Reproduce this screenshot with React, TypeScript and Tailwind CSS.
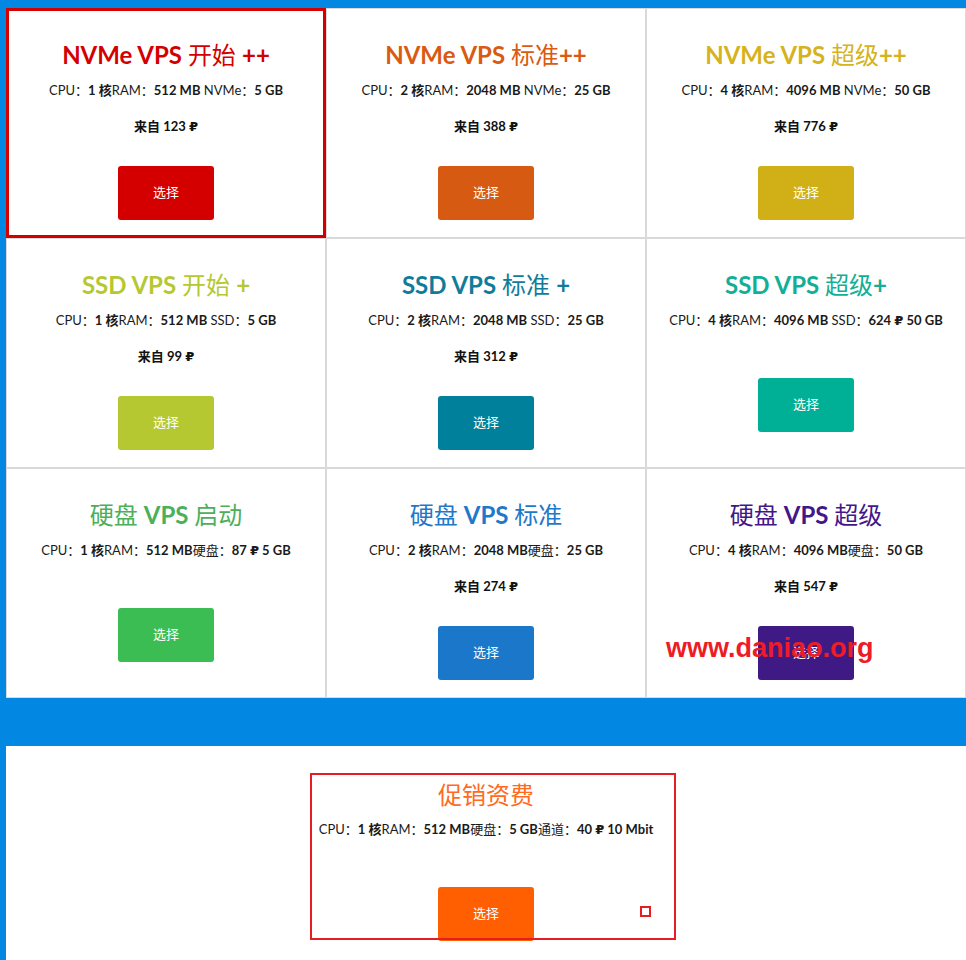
import React from "react";

type Part = { t: string; b?: boolean };

type Plan = {
  title: Part[];
  color: string;
  btn: string;
  specs: Part[];
  price?: string;
  active?: boolean;
};

const FONT = { fontFamily: 'Lato, "Noto Sans CJK SC", "DejaVu Sans", sans-serif' };

const plans: Plan[] = [
  {
    title: [{ t: "NVMe VPS ", b: true }, { t: "开始 " }, { t: "++", b: true }],
    color: "#d40000",
    btn: "#d40000",
    specs: [{ t: "CPU：" }, { t: "1 核", b: true }, { t: "RAM：" }, { t: "512 MB", b: true }, { t: " NVMe：" }, { t: "5 GB", b: true }],
    price: "来自 123 ₽",
    active: true,
  },
  {
    title: [{ t: "NVMe VPS ", b: true }, { t: "标准" }, { t: "++", b: true }],
    color: "#d95a10",
    btn: "#d65a11",
    specs: [{ t: "CPU：" }, { t: "2 核", b: true }, { t: "RAM：" }, { t: "2048 MB", b: true }, { t: " NVMe：" }, { t: "25 GB", b: true }],
    price: "来自 388 ₽",
  },
  {
    title: [{ t: "NVMe VPS ", b: true }, { t: "超级" }, { t: "++", b: true }],
    color: "#d6b21c",
    btn: "#d0b016",
    specs: [{ t: "CPU：" }, { t: "4 核", b: true }, { t: "RAM：" }, { t: "4096 MB", b: true }, { t: " NVMe：" }, { t: "50 GB", b: true }],
    price: "来自 776 ₽",
  },
  {
    title: [{ t: "SSD VPS ", b: true }, { t: "开始 " }, { t: "+", b: true }],
    color: "#b5c832",
    btn: "#b5c832",
    specs: [{ t: "CPU：" }, { t: "1 核", b: true }, { t: "RAM：" }, { t: "512 MB", b: true }, { t: " SSD：" }, { t: "5 GB", b: true }],
    price: "来自 99 ₽",
  },
  {
    title: [{ t: "SSD VPS ", b: true }, { t: "标准 " }, { t: "+", b: true }],
    color: "#107c9a",
    btn: "#00809b",
    specs: [{ t: "CPU：" }, { t: "2 核", b: true }, { t: "RAM：" }, { t: "2048 MB", b: true }, { t: " SSD：" }, { t: "25 GB", b: true }],
    price: "来自 312 ₽",
  },
  {
    title: [{ t: "SSD VPS ", b: true }, { t: "超级" }, { t: "+", b: true }],
    color: "#12ae96",
    btn: "#00b096",
    specs: [{ t: "CPU：" }, { t: "4 核", b: true }, { t: "RAM：" }, { t: "4096 MB", b: true }, { t: " SSD：" }, { t: "624 ₽ 50 GB", b: true }],
  },
  {
    title: [{ t: "硬盘 " }, { t: "VPS ", b: true }, { t: "启动" }],
    color: "#4caf5a",
    btn: "#3bbd54",
    specs: [{ t: "CPU：" }, { t: "1 核", b: true }, { t: "RAM：" }, { t: "512 MB", b: true }, { t: "硬盘：" }, { t: "87 ₽ 5 GB", b: true }],
  },
  {
    title: [{ t: "硬盘 " }, { t: "VPS ", b: true }, { t: "标准" }],
    color: "#1f78c8",
    btn: "#1a77c9",
    specs: [{ t: "CPU：" }, { t: "2 核", b: true }, { t: "RAM：" }, { t: "2048 MB", b: true }, { t: "硬盘：" }, { t: "25 GB", b: true }],
    price: "来自 274 ₽",
  },
  {
    title: [{ t: "硬盘 " }, { t: "VPS ", b: true }, { t: "超级" }],
    color: "#43168a",
    btn: "#3f1a85",
    specs: [{ t: "CPU：" }, { t: "4 核", b: true }, { t: "RAM：" }, { t: "4096 MB", b: true }, { t: "硬盘：" }, { t: "50 GB", b: true }],
    price: "来自 547 ₽",
  },
];

function Parts({ parts }: { parts: Part[] }) {
  return (
    <>
      {parts.map((p, i) => (
        <span key={i} className={p.b ? "font-bold" : "font-normal"}>
          {p.t}
        </span>
      ))}
    </>
  );
}

function Cell({ plan }: { plan: Plan }) {
  return (
    <div
      className={
        plan.active
          ? "w-[320px] h-[230px] bg-white border-[3px] border-[#d40000] flex flex-col items-center pt-[29px]"
          : "w-[320px] h-[230px] bg-white border border-[#d9d9d9] flex flex-col items-center pt-[31px]"
      }
    >
      <div className="text-[24px] leading-[30px] whitespace-nowrap" style={{ color: plan.color }}>
        <Parts parts={plan.title} />
      </div>
      <div className="mt-[10px] text-[13px] leading-[20px] whitespace-nowrap text-[#1a1a1a]">
        <Parts parts={plan.specs} />
      </div>
      {plan.price && (
        <div className="mt-[16px] text-[13px] leading-[20px] font-bold text-[#111]">{plan.price}</div>
      )}
      <button
        className={
          (plan.price ? "mt-[30px]" : "mt-[48px]") +
          " w-[96px] h-[54px] shrink-0 rounded-[3px] text-white text-[13px]"
        }
        style={{ backgroundColor: plan.btn }}
      >
        选择
      </button>
    </div>
  );
}

export default function App() {
  return (
    <div className="relative w-[966px] min-h-[960px] bg-[#0288e2] pl-[6px] pt-[8px] overflow-hidden" style={FONT}>
      <div className="grid grid-cols-[320px_320px_320px]">
        {plans.map((p, i) => (
          <Cell key={i} plan={p} />
        ))}
      </div>
      <div className="mt-[48px] w-[960px] h-[214px] bg-white flex">
        <div className="w-[320px]" />
        <div className="w-[320px] flex flex-col items-center pt-[34px]">
          <div className="text-[24px] leading-[30px] whitespace-nowrap text-[#ff6a1f] font-normal">促销资费</div>
          <div className="mt-[9px] text-[13px] leading-[20px] whitespace-nowrap text-[#1a1a1a]">
            <Parts
              parts={[
                { t: "CPU：" },
                { t: "1 核", b: true },
                { t: "RAM：" },
                { t: "512 MB", b: true },
                { t: "硬盘：" },
                { t: "5 GB", b: true },
                { t: "通道：" },
                { t: "40 ₽ 10 Mbit", b: true },
              ]}
            />
          </div>
          <button className="mt-[48px] w-[96px] h-[54px] shrink-0 rounded-[3px] text-white text-[13px] bg-[#ff5f00]">
            选择
          </button>
        </div>
      </div>

      {/* annotation overlays */}
      <div className="absolute left-[310px] top-[773px] w-[366px] h-[167px] border-2 border-[#e81c24] pointer-events-none" />
      <div className="absolute left-[640px] top-[906px] w-[11px] h-[11px] border-2 border-[#e81c24] pointer-events-none" />
      <div
        className="absolute left-[666px] top-[633px] text-[27px] leading-[30px] font-bold text-[#ee1c25] whitespace-nowrap pointer-events-none"
        style={{ fontFamily: '"Liberation Sans", Arial, sans-serif' }}
      >
        www.daniao.org
      </div>
    </div>
  );
}
